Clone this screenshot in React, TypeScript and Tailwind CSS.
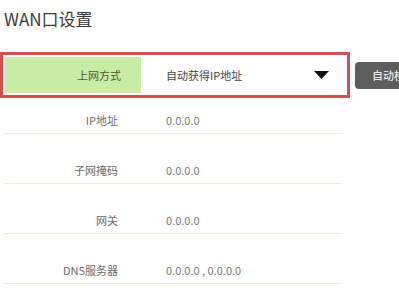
const font = { fontFamily: '"Noto Sans CJK SC", "Noto Sans", sans-serif' };

const rows = [
  { label: "IP地址", value: "0.0.0.0", h: "h-[36px]" },
  { label: "子网掩码", value: "0.0.0.0", h: "h-[50px]" },
  { label: "网关", value: "0.0.0.0", h: "h-[50px]" },
  { label: "DNS服务器", value: "0.0.0.0 , 0.0.0.0", h: "h-[50px]" },
];

const App = () => {
  return (
    <div className="w-[399px] h-[300px] overflow-hidden bg-white" style={font}>
      <h1 className="pl-[4px] pt-[7px] text-[17px] leading-[24px] text-[#3a3a3a]">WAN口设置</h1>

      <div className="mt-[21px] flex items-center">
        {/* connection type select, highlighted */}
        <div className="flex h-[46px] w-[350px] border-[3px] border-[#d4504f] p-[2px] shrink-0">
          <div className="flex w-[136px] items-center justify-end bg-[#c8eca4] pr-[20px] text-[11px] text-[#4a5a3a]">
            上网方式
          </div>
          <div className="flex flex-1 items-center justify-between pl-[25px] pr-[16px] text-[11px] text-[#444]">
            <span>自动获得IP地址</span>
            <svg width="15" height="8" viewBox="0 0 15 8">
              <path d="M0 0 H15 L7.5 8 Z" fill="#111" />
            </svg>
          </div>
        </div>
        <button className="ml-[5px] h-[27px] shrink-0 rounded-[4px] bg-[#5d5d5d] px-[17px] text-[11px] text-white">
          自动检测
        </button>
      </div>

      <div className="ml-[4px] w-[339px]">
        {rows.map((r) => (
          <div
            key={r.label}
            className={`flex items-end border-b border-[#e9eedd] pb-[5px] ${r.h}`}
          >
            <span className="w-[114px] text-right text-[11px] leading-[16px] text-[#6a6a6a]">{r.label}</span>
            <span className="ml-[48px] text-[11px] leading-[16px] text-[#7a7a7a]">{r.value}</span>
          </div>
        ))}
      </div>
    </div>
  );
};

export default App;
